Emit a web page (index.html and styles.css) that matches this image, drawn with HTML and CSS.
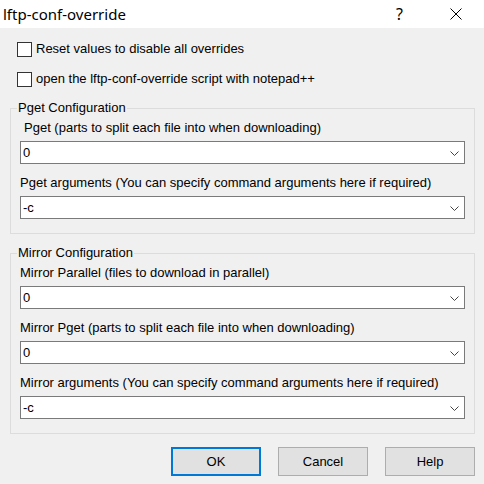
FILE: index.html
```html
<!DOCTYPE html>
<html>
<head>
<meta charset="utf-8">
<link rel="stylesheet" href="styles.css">
</head>
<body>
<div class="window">
  <div class="titlebar">
    <span class="title">lftp-conf-override</span>
    <span class="help-btn">?</span>
    <svg class="close-btn" width="12" height="12" viewBox="0 0 12 12"><path d="M0.5 0.5 L11.5 11.5 M11.5 0.5 L0.5 11.5" stroke="#000" stroke-width="1" fill="none"/></svg>
  </div>
  <div class="content">
    <label class="check"><span class="box"></span><span>Reset values to disable all overrides</span></label>
    <label class="check"><span class="box"></span><span>open the lftp-conf-override script with notepad++</span></label>

    <fieldset class="group">
      <legend>Pget Configuration</legend>
      <div class="label indent">Pget (parts to split each file into when downloading)</div>
      <div class="combo"><span>0</span><svg class="chev" width="9" height="5" viewBox="0 0 9 5"><path d="M0.5 0.5 L4.5 4.5 L8.5 0.5" stroke="#444" fill="none"/></svg></div>
      <div class="label">Pget arguments (You can specify command arguments here if required)</div>
      <div class="combo"><span>-c</span><svg class="chev" width="9" height="5" viewBox="0 0 9 5"><path d="M0.5 0.5 L4.5 4.5 L8.5 0.5" stroke="#444" fill="none"/></svg></div>
    </fieldset>

    <fieldset class="group">
      <legend>Mirror Configuration</legend>
      <div class="label">Mirror Parallel (files to download in parallel)</div>
      <div class="combo"><span>0</span><svg class="chev" width="9" height="5" viewBox="0 0 9 5"><path d="M0.5 0.5 L4.5 4.5 L8.5 0.5" stroke="#444" fill="none"/></svg></div>
      <div class="label">Mirror Pget (parts to split each file into when downloading)</div>
      <div class="combo"><span>0</span><svg class="chev" width="9" height="5" viewBox="0 0 9 5"><path d="M0.5 0.5 L4.5 4.5 L8.5 0.5" stroke="#444" fill="none"/></svg></div>
      <div class="label">Mirror arguments (You can specify command arguments here if required)</div>
      <div class="combo"><span>-c</span><svg class="chev" width="9" height="5" viewBox="0 0 9 5"><path d="M0.5 0.5 L4.5 4.5 L8.5 0.5" stroke="#444" fill="none"/></svg></div>
    </fieldset>

    <div class="buttons">
      <button class="btn default">OK</button>
      <button class="btn">Cancel</button>
      <button class="btn">Help</button>
    </div>
  </div>
</div>
</body>
</html>
```
FILE: styles.css
```css
* { box-sizing: border-box; }
html, body { margin: 0; padding: 0; }
body {
  width: 484px;
  height: 484px;
  background: #f0f0f0;
  font-family: "Liberation Sans", Arial, sans-serif;
  font-size: 13px;
  color: #000;
  overflow: hidden;
}
.titlebar {
  height: 28px;
  background: #fff;
  display: flex;
  align-items: center;
  padding: 0 0 1px 3px;
}
.title {
  font-family: "Noto Sans", "Open Sans", sans-serif;
  font-size: 15px;
  flex: 1;
  line-height: 20px;
}
.help-btn {
  font-family: "Noto Sans", sans-serif;
  font-size: 16px;
  line-height: 20px;
  margin-right: 47px;
}
.close-btn {
  margin-right: 22px;
}
.content {
  padding: 0 9px 0 10px;
}
.check {
  display: flex;
  align-items: center;
  height: 16px;
  padding-left: 7px;
  gap: 4px;
  line-height: 16px;
}
.check:first-child { margin-top: 13px; }
.check + .check { margin-top: 14px; }
.box {
  width: 15px;
  height: 15px;
  border: 1px solid #333;
  background: #fff;
  flex: none;
}
.group {
  margin: 0;
  border: 1px solid #dcdcdc;
  padding: 0 9px 14px 9px;
  min-width: 0;
}
.check + .group { margin-top: 13px; }
.group + .group { margin-top: 11px; }
.group legend {
  padding: 0 1px;
  margin-left: -3px;
  line-height: 16px;
}
.label {
  line-height: 16px;
  margin-top: 4px;
  white-space: nowrap;
}
.combo + .label { margin-top: 11px; }
.label.indent { padding-left: 4px; }
.combo {
  margin-top: 5px;
  height: 23px;
  border: 1px solid #7a7a7a;
  background: #fff;
  display: flex;
  align-items: center;
  justify-content: space-between;
  padding: 0 5px 0 2px;
}
.chev { display: block; margin-top: 1px; }
.buttons {
  display: flex;
  justify-content: flex-end;
  gap: 17px;
  margin-top: 13px;
}
.btn {
  width: 90px;
  height: 29px;
  background: #e1e1e1;
  border: 1px solid #adadad;
  font-family: "Liberation Sans", Arial, sans-serif;
  font-size: 13px;
  color: #000;
  padding: 0;
}
.btn.default {
  border: 2px solid #0078d7;
}
```
